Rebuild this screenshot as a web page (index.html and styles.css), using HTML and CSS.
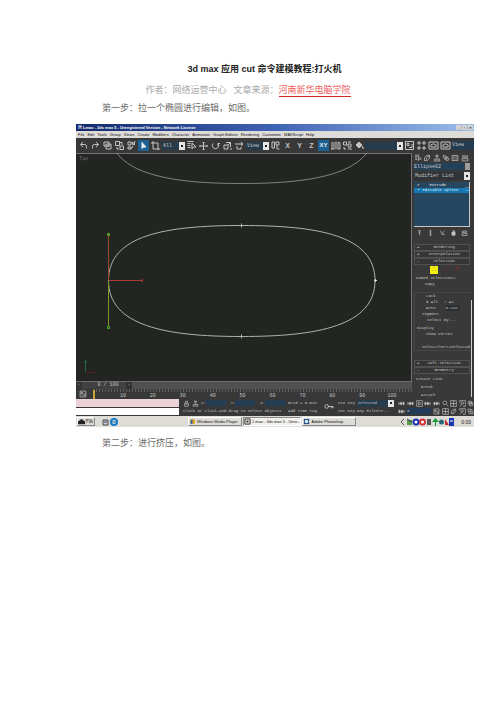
FILE: index.html
```html
<!DOCTYPE html>
<html lang="zh-CN">
<head>
<meta charset="utf-8">
<meta name="viewport" content="width=device-width, initial-scale=1">
<title>3d max 应用 cut 命令建模教程:打火机</title>
<link rel="stylesheet" href="styles.css">
</head>
<body>
<svg class="sprite" aria-hidden="true">
  <symbol id="undo" viewBox="0 0 11 11"><path d="M5 2 2.500 4.500 5 7M3 4.500h3.500q2 0 2 2V8.500"/></symbol>
  <symbol id="redo" viewBox="0 0 11 11"><path d="M6 2l2.500 2.500L6 7M8 4.500H4.500q-2 0-2 2V8.500"/></symbol>
  <symbol id="link" viewBox="0 0 11 11"><path d="M2 2h5v4H2zM4 4h5v5H4zM5 6h3"/></symbol>
  <symbol id="unlink" viewBox="0 0 11 11"><path d="M1.500 1.500h4v4h-4zM6 6h3.500v3.500H6zM6 2.500h2V5M3 7v2h2"/></symbol>
  <symbol id="bind" viewBox="0 0 11 11"><path d="M2 2h3v3H2zM2 7h3v2H2zM5 9l2-3M6 2l3 2-2 1zM8 5l1-4"/></symbol>
  <symbol id="arrow" viewBox="0 0 11 11"><path d="M4 2.500v6l1.500-1.500h2.500z" fill="currentColor"/></symbol>
  <symbol id="region" viewBox="0 0 11 11"><path d="M3 1v8h7M1 3h7v7"/></symbol>
  <symbol id="names" viewBox="0 0 11 11"><path d="M1.500 1.500h6M1.500 3.500h3M1.500 5.500h3M1.500 7.500h3M6 3v6l1.500-2H10z"/></symbol>
  <symbol id="move" viewBox="0 0 11 11"><path d="M5.500 2v8M1.500 6h8M4.500 3l1-1 1 1M4.500 9l1 1 1-1M2.500 5l-1 1 1 1M8.500 5l1 1-1 1"/></symbol>
  <symbol id="rotate" viewBox="0 0 11 11"><path d="M3 3.500a3.200 3.200 0 1 0 5 0M8 6V3.500h2"/></symbol>
  <symbol id="scale" viewBox="0 0 11 11"><path d="M2 5h4v4H2zM4 2.500h4.500V7M6 5l2.500-2.500M8 9h2"/></symbol>
  <symbol id="manip" viewBox="0 0 11 11"><path d="M1 4h8M7 2l2 2-2 2M3 6v3h4V7"/></symbol>
  <symbol id="pivot" viewBox="0 0 11 11"><path d="M2 2h2.500v6H2zM6 2h3v3H6zM7 5v4h2.500"/></symbol>
  <symbol id="mirror" viewBox="0 0 11 11"><path d="M2 2v7M4 2v7L1 9M6 1.500v8M8 2v7h2V3z"/></symbol>
  <symbol id="align" viewBox="0 0 11 11"><path d="M1.500 2h3v3h-3zM6 2h3M6 4h3v3H6zM2 7v2h2M6 9h4"/></symbol>
  <symbol id="gem" viewBox="0 0 11 11"><path d="M2 5l3-3 3 3-3 3z" fill="currentColor"/><path d="M8 8h2M8 6l1 2"/></symbol>
  <symbol id="frame" viewBox="0 0 11 11"><path d="M1.500 1.500h8v8h-8zM3 3.500h2v2H3zM5 7.500h3V4"/></symbol>
  <symbol id="dots" viewBox="0 0 11 11"><path d="M2 2h2v2H2zM7 2h2v2H7zM2 7h2v2H2zM7 7h2v2H7z"/></symbol>
  <symbol id="teapot" viewBox="0 0 11 11"><path d="M1 2h9v7H1z"/><path d="M3 7q-1-3 2.500-3T8 7z"/></symbol>
  <symbol id="hammer" viewBox="0 0 11 11"><path d="M2 2h7v2H2zM5.500 4v5M3 9h5"/></symbol>
  <symbol id="bend" viewBox="0 0 11 11"><path d="M2 9V5l3-3h4v4L6 9zM5 5l4-3M5 5v3"/></symbol>
  <symbol id="tree" viewBox="0 0 11 11"><path d="M4 1.500h3v2H4zM5.500 4v3M2 9V7h7v2M1 9.500h9"/></symbol>
  <symbol id="wheel" viewBox="0 0 11 11"><path d="M1.500 2l4 1 4 3-1 3-4-1-2-3zM4 5h3v2H4z"/></symbol>
  <symbol id="screen" viewBox="0 0 11 11"><path d="M1.500 2h8v7h-8zM4 3v5M7 3v5"/></symbol>
  <symbol id="util" viewBox="0 0 11 11"><path d="M2 2.500h7v2H2zM1.500 6.500h8v3h-8z"/></symbol>
  <symbol id="pin" viewBox="0 0 11 11"><path d="M3 2h5M5.500 2v7M4 5h3"/></symbol>
  <symbol id="bar" viewBox="0 0 11 11"><path d="M5 1h1v9H5z"/></symbol>
  <symbol id="vee" viewBox="0 0 11 11"><path d="M2 2l3 6 3-6M6 8h3"/></symbol>
  <symbol id="trash" viewBox="0 0 11 11"><path d="M3 4h5v5H3zM4 2h3v2" fill="currentColor"/></symbol>
  <symbol id="lock" viewBox="0 0 11 11"><path d="M2.500 5h6v5h-6zM4 5V2h3v3M4 7h3"/></symbol>
  <symbol id="key" viewBox="0 0 11 11"><circle cx="3" cy="6" r="2"/><path d="M5 6h5v2M8 6v2"/></symbol>
  <symbol id="prev" viewBox="0 0 11 11"><path d="M1.500 3v5M5.500 3v5L2.500 5.500zM9.500 3v5l-3-2.500z" fill="currentColor"/></symbol>
  <symbol id="next" viewBox="0 0 11 11"><path d="M9.500 3v5M5.500 3v5l3-2.500zM1.500 3v5l3-2.500z" fill="currentColor"/></symbol>
  <symbol id="play" viewBox="0 0 11 11"><path d="M1 1h9v9H1zM4 3v5l4-2.500z"/></symbol>
  <symbol id="zoom" viewBox="0 0 11 11"><circle cx="4.500" cy="4.500" r="3"/><path d="M7 7l3 3"/></symbol>
  <symbol id="zoomall" viewBox="0 0 11 11"><path d="M1 1h9v9H1zM5.500 1v9M1 5.500h9"/></symbol>
  <symbol id="zoomregion" viewBox="0 0 11 11"><path d="M1 4V1h9v9H6"/><circle cx="5" cy="5" r="2"/><path d="M1 10l3-3"/></symbol>
</svg>

<article class="page">
  <h1 class="title">3d max 应用 cut 命令建模教程:打火机</h1>
  <p class="meta">作者：网络运营中心<span class="source">文章来源：<a href="#">河南新华电脑学院</a></span></p>
  <p class="step">第一步：拉一个椭圆进行编辑，如图。</p>

  <figure class="shot">
    <header class="titlebar">
      <span>▣ Lmax - 3ds max 5 - Unregistered Version - Network License</span>
      <span class="winbtns"><button aria-label="Minimize">_</button><button aria-label="Restore">▫</button><button aria-label="Close">×</button></span>
    </header>
    <nav class="menubar">
      <button>File</button><button>Edit</button><button>Tools</button><button>Group</button><button>Views</button><button>Create</button><button>Modifiers</button><button>Character</button><button>Animation</button><button>Graph Editors</button><button>Rendering</button><button>Customize</button><button>MAXScript</button><button>Help</button>
    </nav>
    <div class="toolbar">
      <button aria-label="Undo"><svg><use href="#undo"/></svg></button>
      <button aria-label="Redo"><svg><use href="#redo"/></svg></button>
      <button aria-label="Link"><svg><use href="#link"/></svg></button>
      <button aria-label="Unlink"><svg><use href="#unlink"/></svg></button>
      <button aria-label="Bind"><svg><use href="#bind"/></svg></button>
      <button class="on" aria-label="Select"><svg><use href="#arrow"/></svg></button>
      <button aria-label="Region"><svg><use href="#region"/></svg></button>
      <select class="drop" aria-label="Filter"><option>All</option></select>
      <button aria-label="Select by name"><svg><use href="#names"/></svg></button>
      <button aria-label="Move"><svg><use href="#move"/></svg></button>
      <button aria-label="Rotate"><svg><use href="#rotate"/></svg></button>
      <button aria-label="Scale"><svg><use href="#scale"/></svg></button>
      <button aria-label="Manipulate"><svg><use href="#manip"/></svg></button>
      <select class="drop" aria-label="Coordinates"><option>View</option></select>
      <button aria-label="Pivot"><svg><use href="#pivot"/></svg></button>
      <button class="axis">X</button>
      <button class="axis">Y</button>
      <button class="axis">Z</button>
      <button class="axis on pair">XY</button>
      <button aria-label="Mirror"><svg><use href="#mirror"/></svg></button>
      <button aria-label="Align"><svg><use href="#align"/></svg></button>
      <button aria-label="Snap"><svg><use href="#gem"/></svg></button>
      <select class="drop wide" aria-label="Named selection"><option></option></select>
      <button aria-label="Curve editor"><svg><use href="#frame"/></svg></button>
      <button aria-label="Schematic"><svg><use href="#dots"/></svg></button>
      <button aria-label="Render"><svg><use href="#teapot"/></svg></button>
      <button aria-label="Quick render"><svg><use href="#teapot"/></svg></button>
      <span class="viewtype">View</span>
    </div>

    <div class="main">
      <div class="stage">
        <svg class="viewport" viewBox="0 0 336 228" role="img" aria-label="Top">
          <path class="edge" d="M0 .5h335.500V228"/>
          <text x="3" y="7">Top</text>
          <g class="spline">
            <path id="oval" d="M32.500 127.500C32.500 82 90 72.500 165.500 72.500S299 82 299 127.500 241 183.500 165.500 183.500 32.500 173 32.500 127.500z"/>
            <use href="#oval" y="-153" opacity=".65"/>
            <path d="M165.500 70.500v4M165.500 181.500v4"/>
          </g>
          <path d="M299.500 126v3M298 127.500h3" stroke="#ddd"/>
          <path d="M32.500 81v46" stroke="#9b4a2a"/>
          <path d="M32.500 128v46" stroke="#7c9a26"/>
          <path d="M33 127.500h34M66.500 126v3" stroke="#b13a3c"/>
          <path d="M31.500 80.500h2v2h-2zM31.500 173.500h2v2h-2z" stroke="#4fae2c"/>
          <path d="M9.500 207v12M8 209h3" stroke="#1d6b45"/>
          <path d="M10 219.500h9" stroke="#5a2027"/>
        </svg>
        <div class="slider"><button aria-label="Previous frame">‹</button><span>0 / 100</span><button aria-label="Next frame">›</button></div>
        <div class="ruler">
          <button aria-label="Track bar"><svg><use href="#frame"/></svg></button>
          <div class="ticks"><i></i><span>10</span><span>20</span><span>30</span><span>40</span><span>50</span><span>60</span><span>70</span><span>80</span><span>90</span><span>100</span></div>
        </div>
      </div>

      <aside class="panel">
        <div class="panelbody">
          <div class="tabs">
            <button aria-label="Create"><svg><use href="#names"/></svg></button><button aria-label="Modify"><svg><use href="#bend"/></svg></button><button aria-label="Hierarchy"><svg><use href="#tree"/></svg></button><button aria-label="Motion"><svg><use href="#wheel"/></svg></button><button aria-label="Display"><svg><use href="#screen"/></svg></button><button aria-label="Utilities"><svg><use href="#util"/></svg></button>
          </div>
          <div class="object"><input aria-label="Object name" value="Ellipse02"><i></i></div>
          <select class="drop modifier" aria-label="Modifier"><option>Modifier List</option></select>
          <ul class="stack"><li>✦<span>Extrude</span></li><li class="picked">▪<span>Editable Spline</span><b>∷</b></li></ul>
          <div class="stacktools">
            <button aria-label="Pin stack"><svg><use href="#pin"/></svg></button><button aria-label="Show result"><svg><use href="#bar"/></svg></button><button aria-label="Make unique"><svg><use href="#vee"/></svg></button><button aria-label="Remove"><svg><use href="#trash"/></svg></button><button aria-label="Configure"><svg><use href="#util"/></svg></button>
          </div>
          <button class="roll"><b>+</b>Rendering</button>
          <button class="roll"><b>+</b>Interpolation</button>
          <button class="roll"><b>-</b>Selection</button>
          <div class="levels"><i>∴</i><span>╱</span><span>∧</span></div>
          <div class="row">Named Selections:</div>
          <div class="row in2">Copy</div>
          <div class="box">
            <div class="row in2">Lock</div>
            <div class="row in2"><span>● All</span><span>○ A2</span></div>
            <label class="row in2 area">Area <input value="0.1in"></label>
            <div class="row in1">Segment</div>
            <div class="row in3">Select By...</div>
            <div class="row gap">Display</div>
            <div class="row in2">Show Vertex</div>
            <div class="row info">Select/Vert1Selected</div>
          </div>
          <button class="roll"><b>+</b>Soft Selection</button>
          <button class="roll"><b>-</b>Geometry</button>
          <div class="row gap">Create Line</div>
          <div class="row in1 gap">Break</div>
          <div class="row in1 gap">Attach</div>
        </div>
        <div class="scroll"><i></i></div>
      </aside>
    </div>

    <div class="status">
      <div class="listener"><span></span><span></span></div>
      <div class="readout">
        <div class="line coords"><svg><use href="#lock"/></svg><svg><use href="#tree"/></svg><label>X:<input></label><label>Y:<input></label><label>Z:<input></label></div>
        <div class="line">Click or click-and-drag to select objects</div>
      </div>
      <div class="grid"><div class="line">Grid = 0.0in</div><div class="line">Add Time Tag</div></div>
      <svg class="keyicon"><use href="#key"/></svg>
      <div class="keys">
        <div class="line"><span>Uto Key</span><select class="drop" aria-label="Key set"><option>Selected</option></select></div>
        <div class="line"><span>Set Key</span><span>Key Filters...</span></div>
      </div>
      <div class="play">
        <div class="line"><svg><use href="#prev"/></svg><svg><use href="#prev"/></svg><svg><use href="#play"/></svg><svg><use href="#next"/></svg><svg><use href="#next"/></svg></div>
        <div class="line"><svg><use href="#next"/></svg><input value="0" aria-label="Frame"><svg><use href="#frame"/></svg></div>
      </div>
      <div class="nav">
        <div class="line"><svg><use href="#zoom"/></svg><svg><use href="#zoomall"/></svg><svg><use href="#zoomregion"/></svg><svg><use href="#link"/></svg></div>
        <div class="line"><svg><use href="#zoomall"/></svg><svg><use href="#bend"/></svg><svg><use href="#zoomregion"/></svg><svg><use href="#unlink"/></svg></div>
      </div>
    </div>

    <footer class="taskbar">
      <button class="start"><svg viewBox="0 0 8 8"><path d="M0 4l4-3 4 3v3H0z" fill="#222"/></svg>开始</button>
      <svg class="quick" viewBox="0 0 18 10"><path d="M2 3h5v5H2z" fill="#ccd" stroke="#444"/><path d="M3 5h3" stroke="#444"/><circle cx="13" cy="5" r="3" fill="none" stroke="#1879c8" stroke-width="2"/><path d="M11 5h5" stroke="#1879c8"/></svg>
      <div class="tasks">
        <button><svg viewBox="0 0 8 8"><circle cx="4" cy="4" r="3" fill="#e9a21c"/><path d="M2 2h2v5H2z" fill="#2864b0"/></svg>Windows Media Player</button>
        <button class="active"><svg viewBox="0 0 8 8"><path d="M1 1h6v6H1z" fill="#ddd" stroke="#222"/><path d="M3 3h2v2H3z" fill="#222"/></svg>1 max - 3ds max 5 - Unre...</button>
        <button><svg viewBox="0 0 8 8"><path d="M1 1h6v6H1z" fill="#244f86"/><circle cx="4" cy="4" r="2" fill="#dce9f0"/></svg>Adobe Photoshop</button>
      </div>
      <div class="tray">
        <svg viewBox="0 0 56 10"><path d="M5 2 2 5l3 3" fill="none" stroke="#555"/><path d="M8 3h5v5H8z" fill="#5b9b48"/><path d="M8 2l5 3" stroke="#236"/><circle cx="17" cy="5" r="2.500" fill="#fff" stroke="#1c2fb0" stroke-width="2"/><circle cx="23.500" cy="5" r="2.500" fill="#fff" stroke="#d5303a" stroke-width="2"/><path d="M28 2h4v6h-4z" fill="#555"/><path d="M36.500 1 40 5h-7zM36 5h1v4h-1z" fill="#1b9a38"/><circle cx="42.500" cy="5" r="2.500" fill="#256b78"/><path d="M46 2l4 6h-4z" fill="#c22b35"/><path d="M50 1h5v8h-5z" fill="#1d38b5"/><path d="M51 4h3" stroke="#fff"/></svg>
        <time>0:00</time>
      </div>
    </footer>
  </figure>

  <p class="step">第二步：进行挤压，如图。</p>
</article>
</body>
</html>
```
FILE: styles.css
```css
* { box-sizing: border-box; }

body {
  margin: 0;
  background: #fff;
  font-family: "Liberation Sans", "Noto Sans CJK SC", sans-serif;
}

.sprite { position: absolute; width: 0; height: 0; }
symbol path, symbol circle { stroke: currentColor; stroke-width: 1; }

button, input, select {
  margin: 0;
  padding: 0;
  border: 0;
  border-radius: 0;
  background: none;
  color: inherit;
  font: inherit;
  appearance: none;
}

svg { display: block; fill: none; }

/* Article text */
.page { padding: 60px 84px 0; }
.title {
  margin: 0;
  padding-left: 33px;
  font-size: 9px;
  line-height: 18px;
  text-align: center;
  color: #222;
}
.meta, .step { margin: 0; font-size: 9px; line-height: 18px; }
.meta { margin-top: 3px; text-align: center; color: #aaa; }
.source { margin-left: 7px; }
.meta a {
  display: inline-block;
  line-height: 12px;
  color: #ee5a5a;
  text-decoration: none;
  border-bottom: 1px solid #cf2b22;
}
.step { text-indent: 18px; color: #6a6a6a; }

/* Application window */
.shot {
  margin: 7px -62px 7px -8px;
  background: #383838;
  color: #c4c4c4;
  font: 4px/6px "Liberation Mono", "Noto Sans CJK SC", monospace;
  overflow: hidden;
}

.titlebar {
  display: flex;
  justify-content: space-between;
  align-items: center;
  height: 7px;
  padding: 0 1px 0 2px;
  background: linear-gradient(90deg, #12296b, #3f63b5 50%, #9dbde8);
  color: #fff;
  font-family: "Liberation Sans", sans-serif;
  font-weight: bold;
}
.winbtns { display: flex; gap: 1px; }
.winbtns button { width: 5px; height: 5px; line-height: 5px; background: #d6d3ce; color: #222; }

.menubar {
  display: flex;
  align-items: center;
  gap: 3px;
  height: 7px;
  padding-left: 2px;
  background: #dedcd8;
  color: #111;
  font-family: "Liberation Sans", sans-serif;
}

.toolbar {
  display: flex;
  align-items: center;
  gap: 1px;
  height: 15px;
  padding-left: 2px;
}
.toolbar button { width: 11px; height: 11px; flex: none; }
.toolbar button svg { width: 11px; height: 11px; }
.toolbar .on { background: #1f6193; color: #e6f0f6; }
.toolbar .axis { font: bold 7px/11px "Liberation Sans", sans-serif; text-align: center; }
.toolbar .pair { font-size: 6px; }
.drop {
  width: 23px;
  height: 8px;
  padding-left: 1px;
  background:
    linear-gradient(#222, #222) right 2px center / 2px 2px no-repeat,
    linear-gradient(#e4e4e4, #e4e4e4) right / 6px 100% no-repeat,
    #263b4c;
  font-size: 5px;
  line-height: 8px;
}
.toolbar .drop { flex: none; }
.toolbar .wide { width: 38px; margin-left: -1px; }
.viewtype { flex: 1; height: 9px; background: #243c52; font-size: 5px; line-height: 8px; }

.main { display: flex; }
.stage { flex: 1; min-width: 0; }
.viewport { width: 100%; background: #232523; }
.viewport path { fill: none; }
.viewport text { fill: #777; font-size: 5px; }
.viewport .edge { stroke: #747474; }
.spline { stroke: #b0b3b0; stroke-width: 1; }

.slider { display: flex; height: 8px; background: #505050; border-top: 1px solid #6c6c6c; line-height: 7px; }
.slider span { width: 44px; padding-left: 8px; text-align: center; font-size: 5px; background: #414141; }
.slider button { width: 6px; background: #333; }
.ruler { display: flex; height: 10px; background: #383838; }
.ruler button { width: 17px; padding-left: 3px; }
.ruler svg { width: 8px; height: 8px; }
.ticks {
  display: flex;
  flex: 1;
  align-items: flex-end;
  padding-right: 5px;
  font-size: 5px;
  line-height: 6px;
  background: repeating-linear-gradient(90deg, #606060 0 1px, transparent 1px 3px) 0 0 / 100% 3px no-repeat;
}
.ticks i { width: 15px; height: 9px; border-left: 2px solid #c9a634; }
.ticks span { flex: 1; text-align: center; }

/* Command panel */
.panel { display: flex; width: 62px; height: 246px; background: #393939; overflow: hidden; }
.panelbody { flex: 1; min-width: 0; padding-left: 2px; white-space: nowrap; }
.tabs { display: flex; height: 9px; }
.tabs button { flex: 1; }
.tabs svg { width: 8px; height: 8px; }
.object { display: flex; gap: 1px; margin-top: 1px; height: 7px; }
.object input { flex: 1; min-width: 0; height: 7px; background: #24415a; font-size: 5px; }
.object i { width: 5px; background: #9c9c9c; }
.modifier { display: block; width: 100%; margin: 2px 0; background-color: #303438; }
.stack {
  height: 45px;
  margin: 0;
  padding: 1px 0 0;
  list-style: none;
  background: #26475f;
  border: solid #c5c5c5;
  border-width: 0 1px 1px 0;
}
.stack li { display: flex; gap: 6px; padding-left: 3px; line-height: 5px; color: #e3e9ec; }
.stack span { flex: 1; padding-left: 4px; }
.stack .picked { background: #1779b4; gap: 3px; }
.stack .picked span { padding-left: 0; }
.stacktools { display: flex; justify-content: space-between; height: 17px; padding: 0 2px 5px; }
.stacktools svg { width: 7px; height: 8px; }
.roll {
  display: block;
  width: 100%;
  height: 7px;
  border: 1px solid #505050;
  line-height: 5px;
  text-align: center;
  background: #363636;
}
.roll b { float: left; margin-left: 2px; }
.levels { display: flex; gap: 5px; height: 10px; padding: 1px 0 1px 16px; color: #a3262a; font-size: 6px; line-height: 8px; }
.levels i { width: 8px; background: #f4ec16; color: #8b8500; text-align: center; font-style: normal; }
.row { display: flex; gap: 6px; height: 6px; padding-left: 2px; }
.row input { width: 14px; height: 6px; background: #2b2f33; }
.in1 { padding-left: 7px; }
.in2 { padding-left: 11px; }
.in3 { padding-left: 12px; }
.area { gap: 10px; }
.gap { margin-top: 2px; }
.box { margin: 5px 0 9px; border: 1px solid #464646; border-right: 0; }
.info { margin-top: 7px; padding-left: 7px; }
.scroll { width: 3px; padding-top: 147px; margin-left: 1px; }
.scroll i { display: block; width: 1px; height: 97px; background: #cfcfcf; }

/* Status area */
.status { display: flex; height: 17px; }
.listener { display: grid; grid-template-rows: 1fr 1fr; gap: 1px; width: 103px; padding-bottom: 1px; }
.listener span { background: #fff; }
.listener span:first-child { background: #ecd2d7; }
.line { display: flex; align-items: center; height: 8px; white-space: nowrap; }
.line svg { flex: none; width: 7px; height: 7px; }
.readout { width: 109px; padding-left: 4px; }
.coords { gap: 2px; }
.coords label { display: flex; flex: 1; min-width: 0; }
.coords input { flex: 1; min-width: 0; margin-right: 3px; height: 6px; background: #263e54; }
.grid { width: 36px; }
.keyicon { width: 10px; height: 14px; }
.keys { flex: 1; min-width: 0; padding-left: 4px; }
.keys .line { gap: 2px; }
.keys .drop { width: 37px; height: 7px; font-size: 4px; line-height: 7px; }
.play { width: 47px; padding-left: 3px; }
.play .line { justify-content: space-between; padding-right: 2px; }
.play input { width: 24px; height: 6px; background: #203a58; }
.nav { width: 32px; }
.nav .line { justify-content: space-between; }

.taskbar {
  display: flex;
  align-items: center;
  height: 11px;
  padding: 0 1px;
  background: #dedcd7;
  color: #111;
  font-family: "Liberation Sans", "Noto Sans CJK SC", sans-serif;
}
.taskbar button {
  display: flex;
  align-items: center;
  height: 9px;
  border: 1px solid #aaa;
  border-color: #fff #888 #888 #fff;
  line-height: 7px;
  white-space: nowrap;
}
.taskbar button svg { width: 7px; height: 7px; flex: none; }
.start { width: 18px; }
.quick { width: 18px; height: 10px; margin-left: 6px; }
.tasks { display: flex; flex: 1; gap: 1px; margin-left: 69px; }
.tasks button { gap: 1px; min-width: 54px; }
.tasks .active { background: #f2f1ee; border-color: #888 #fff #fff #888; }
.tray { display: flex; align-items: center; gap: 5px; padding: 0 2px; }
.tray svg { width: 58px; height: 10px; }
.tray time { font-size: 5px; }
```
